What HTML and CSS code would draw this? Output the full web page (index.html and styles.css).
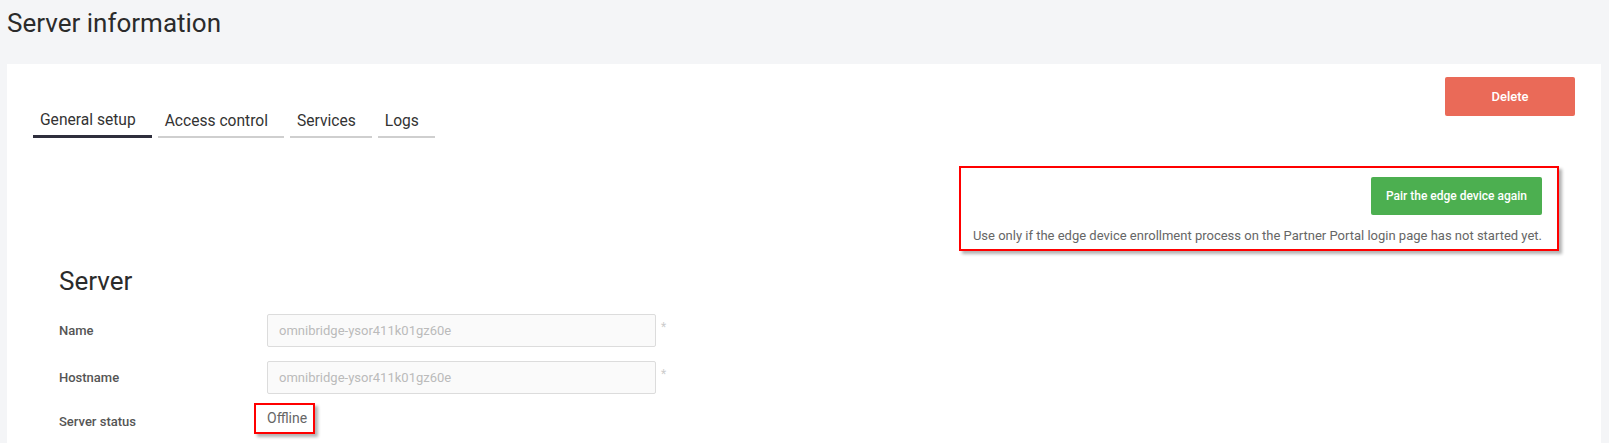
FILE: index.html
```html
<!DOCTYPE html>
<html lang="en">

<head>
  <meta charset="UTF-8">
  <meta name="viewport" content="width=device-width, initial-scale=1.0">
  <title>Server information</title>
  <link rel="stylesheet" href="styles.css">
</head>

<body>
  <h1 class="page-title">Server information</h1>

  <div class="card">
    <div class="card-top">
      <ul class="tabs">
        <li class="tab active">General setup</li>
        <li class="tab">Access control</li>
        <li class="tab">Services</li>
        <li class="tab">Logs</li>
      </ul>
      <button class="btn btn-delete">Delete</button>
    </div>

    <!-- Pairing panel (highlighted) -->
    <div class="pair-panel highlight">
      <button class="btn btn-pair">Pair the edge device again</button>
      <p class="pair-note">Use only if the edge device enrollment process on the Partner Portal login page has not started yet.</p>
    </div>

    <div class="section">
      <h2 class="section-title">Server</h2>
      <div class="form-grid">
        <label class="field-label">Name</label>
        <div class="field">
          <input class="text-input" type="text" value="omnibridge-ysor411k01gz60e" readonly>
          <span class="required">*</span>
        </div>

        <label class="field-label">Hostname</label>
        <div class="field">
          <input class="text-input" type="text" value="omnibridge-ysor411k01gz60e" readonly>
          <span class="required">*</span>
        </div>

        <label class="field-label">Server status</label>
        <div class="field">
          <span class="status highlight">Offline</span>
        </div>
      </div>
    </div>
  </div>
</body>

</html>
```

FILE: styles.css
```css
/* General Body Styles */
body {
  font-family: 'Roboto', 'Liberation Sans', sans-serif;
  background: #f4f5f7;
  color: #333;
  margin: 0;
  padding: 0;
}

.page-title {
  margin: 0;
  padding: 8px 7px 26px;
  font-size: 26px;
  line-height: 30px;
  font-weight: 400;
  color: #2b2b2b;
}

/* Card */
.card {
  background: #fff;
  margin: 0 8px 0 7px;
  padding: 13px 26px 40px;
  min-height: 400px;
}

.card-top {
  display: flex;
  justify-content: space-between;
  align-items: flex-start;
}

/* Tabs */
.tabs {
  list-style: none;
  margin: 25px 0 0;
  padding: 0;
  display: flex;
  align-items: flex-end;
  gap: 6px;
}

.tab {
  font-size: 15.6px;
  line-height: 18px;
  padding: 9px 16px 6px 7px;
  color: #333;
  border-bottom: 2px solid #cfcfcf;
}

.tab.active {
  border-bottom: 3px solid #2e2e3c;
}

/* Buttons */
.btn {
  border: none;
  border-radius: 2px;
  color: #fff;
  font-family: inherit;
  font-size: 13px;
  font-weight: 500;
  cursor: pointer;
}

.btn-delete {
  width: 130px;
  height: 39px;
  background: #ea6a58;
}

.btn-pair {
  height: 38px;
  padding: 0 15px;
  font-size: 12px;
  background: #4caf50;
}

/* Annotation boxes */
.highlight {
  border: 2px solid #f00;
  box-shadow: 3px 3px 3px rgba(0, 0, 0, 0.3);
}

/* Pair panel */
.pair-panel {
  box-sizing: border-box;
  width: 600px;
  margin: 28px 16px 0 auto;
  padding: 9px 15px 5px 12px;
  display: flex;
  flex-direction: column;
  align-items: flex-end;
}

.pair-note {
  margin: 13px 0 0;
  font-size: 13px;
  line-height: 16px;
  color: #666;
  white-space: nowrap;
}

/* Server section */
.section {
  padding-left: 26px;
}

.section-title {
  margin: 16px 0 19px;
  font-size: 26px;
  line-height: 28px;
  font-weight: 400;
  color: #2b2b2b;
}

.form-grid {
  display: grid;
  grid-template-columns: 208px auto;
  row-gap: 14px;
  align-items: center;
}

.field-label {
  font-size: 13px;
  font-weight: 500;
  color: #555;
}

.field {
  display: flex;
  align-items: flex-start;
}

.text-input {
  width: 389px;
  height: 33px;
  box-sizing: border-box;
  padding: 0 11px;
  border: 1px solid #dcdcdc;
  border-radius: 2px;
  background: #fafafa;
  color: #bbb;
  font-family: inherit;
  font-size: 13px;
  outline: none;
}

.required {
  margin: 6px 0 0 5px;
  font-size: 12px;
  color: #ccc;
}

.status {
  margin: -5px 0 0 -13px;
  padding: 6px 6px 6px 11px;
  font-size: 14px;
  line-height: 15px;
  color: #666;
}
```
